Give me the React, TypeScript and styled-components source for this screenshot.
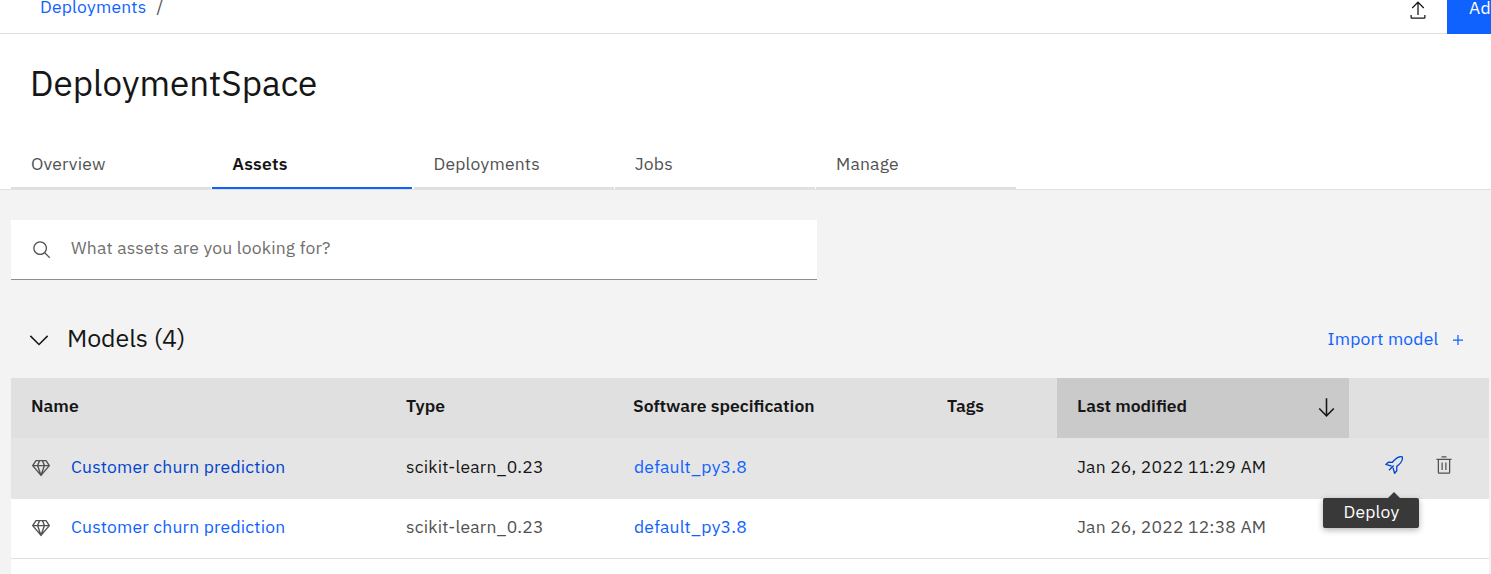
import React from "react";
import styled, { createGlobalStyle } from "styled-components";

const GlobalStyle = createGlobalStyle`
  * { box-sizing: border-box; }
  html, body { margin: 0; height: 100%; overflow: hidden; }
  body {
    background: #f3f3f3;
    color: #161616;
    font-family: "IBM Plex Sans", Roboto, "Liberation Sans", sans-serif;
    font-size: 17.5px;
    line-height: 22px;
  }
`;

const Page = styled.div`
  width: 1491px;
  height: 574px;
  overflow: hidden;
  display: flex;
  flex-direction: column;
`;

const Text = styled.span<{ $spacing?: number }>`
  letter-spacing: ${(p) => p.$spacing ?? 0.2}px;
  white-space: pre;
`;

const TopBar = styled.header`
  height: 34px;
  flex: none;
  display: flex;
  align-items: flex-start;
  background: #fff;
  border-bottom: 1px solid #e0e0e0;
`;

const Breadcrumb = styled.nav`
  flex: 1;
  display: flex;
  gap: 10px;
  padding-left: 40px;
  height: 33px;
  margin-top: -4px;
  color: #525252;
`;

const Link = styled.a<{ $hover?: boolean }>`
  color: ${(p) => (p.$hover ? "#0043ce" : "#0f62fe")};
  text-decoration: none;
`;

const TopAction = styled.div`
  display: flex;
  width: 39px;
  color: #161616;
`;

const PrimaryButton = styled.div`
  width: 44px;
  height: 34px;
  padding-left: 22px;
  background: #0f62fe;
  color: #fff;
  overflow: hidden;
  line-height: 16px;
`;

const SpaceHeader = styled.section`
  flex: none;
  height: 156px;
  display: flex;
  flex-direction: column;
  justify-content: space-between;
  background: #fff;
  border-bottom: 1px solid #e0e0e0;
`;

const Title = styled.h1`
  margin: 25px 0 0 30px;
  font-size: 35px;
  font-weight: 400;
  line-height: 48px;
`;

const Tabs = styled.div`
  display: flex;
  gap: 1.25px;
  padding-left: 11px;
`;

const Tab = styled.div<{ $active?: boolean }>`
  width: 200px;
  height: 50px;
  padding: 14px 20px 0;
  border-bottom: 2px solid ${(p) => (p.$active ? "#0f62fe" : "#e0e0e0")};
  color: ${(p) => (p.$active ? "#161616" : "#525252")};
  font-weight: ${(p) => (p.$active ? 600 : 400)};
`;

const SearchBox = styled.div`
  flex: none;
  width: 806px;
  height: 60px;
  margin: 30px 0 0 11px;
  padding: 0 0 3px 20.5px;
  display: flex;
  align-items: center;
  gap: 19.5px;
  background: #fff;
  border-bottom: 1px solid #8d8d8d;
  color: #6f6f6f;
  svg { margin-top: 4px; color: #525252; }
`;

const SectionHeader = styled.div`
  flex: none;
  height: 98px;
  display: flex;
  align-items: center;
  padding: 20px 23px 0 24px;
`;

const SectionTitle = styled.h2`
  flex: 1;
  margin: 0 0 2px 13px;
  font-size: 25px;
  font-weight: 400;
  line-height: 32px;
`;

const ImportLink = styled(Link)`
  display: flex;
  align-items: center;
  gap: 9.5px;
  svg { margin-top: 1px; }
`;

const Table = styled.div`
  width: 1478px;
  margin-left: 11px;
  flex: 1;
  background: #fff;
`;

const Row = styled.div<{ $kind?: "head" | "hover" }>`
  display: grid;
  grid-template-columns: 375px 227px 314px 130px 292px 140px;
  height: ${(p) => (p.$kind === "hover" ? 61 : 60)}px;
  background: ${(p) => (p.$kind === "head" ? "#e0e0e0" : p.$kind === "hover" ? "#e5e5e5" : "#fff")};
  color: ${(p) => (p.$kind ? "#161616" : "#525252")};
  border-bottom: ${(p) => (p.$kind ? "none" : "1px solid #e0e0e0")};
  font-weight: ${(p) => (p.$kind === "head" ? 600 : 400)};
`;

const Cell = styled.div<{ $sorted?: boolean; $inset?: number }>`
  display: flex;
  align-items: center;
  justify-content: ${(p) => (p.$sorted ? "space-between" : "flex-start")};
  padding: 0 12px 3px ${(p) => p.$inset ?? 20}px;
  background: ${(p) => (p.$sorted ? "#cacaca" : "transparent")};
`;

const HeadCell = styled(Cell)`
  padding-right: 10px;
  padding-bottom: 4px;
  svg { margin-top: 3px; }
`;

const NameCell = styled(Cell)`
  gap: 20px;
  svg { color: #525252; margin-top: 1px; }
`;

const Actions = styled.div`
  display: flex;
  align-items: center;
  gap: 30px;
  padding: 0 0 8px 35px;
  color: #525252;
`;

const DeployAction = styled.div`
  position: relative;
  display: flex;
  color: #0043ce;
`;

const Tooltip = styled.div`
  position: absolute;
  top: 43px;
  left: -61px;
  width: 96px;
  height: 30px;
  padding-left: 20.5px;
  border-radius: 2px;
  background: #393939;
  color: #fff;
  line-height: 28px;
  box-shadow: 0 2px 6px rgba(0, 0, 0, 0.3);
  z-index: 1;
  &::before {
    content: "";
    position: absolute;
    top: -6px;
    left: 65px;
    border: 6px solid transparent;
    border-top: 0;
    border-bottom-color: #393939;
  }
`;

const Icon = ({ d, size = 20 }: { d: string; size?: number }) => (
  <svg width={size} height={size} viewBox="0 0 32 32" fill="currentColor">
    <path d={d} />
  </svg>
);

const icons = {
  export:
    "M26 24v4H6v-4H4v4a2 2 0 0 0 2 2h20a2 2 0 0 0 2-2v-4zM6 12l1.41 1.41L15 5.83V24h2V5.83l7.59 7.58L26 12 16 2z",
  search:
    "M29 27.586l-7.552-7.552a11.018 11.018 0 1 0-1.414 1.414L27.586 29zM4 13a9 9 0 1 1 9 9 9.01 9.01 0 0 1-9-9z",
  chevron: "M16 23L6.2 13.2l1.15-1.15L16 20.7l8.65-8.65 1.15 1.15z",
  add: "M17 15V8h-2v7H8v2h7v7h2v-7h7v-2z",
  arrowDown: "M24.59 16.59L17 24.17V4h-2v20.17l-7.59-7.58L6 18l10 10 10-10z",
  trash:
    "M12 12h2v12h-2zM18 12h2v12h-2zM4 6v2h2v20a2 2 0 0 0 2 2h16a2 2 0 0 0 2-2V8h2V6zM8 28V8h16v20zM12 2h8v2h-8z",
};

const RocketIcon = () => (
  <svg width="20" height="20" viewBox="0 0 20 20" fill="none" stroke="currentColor" strokeWidth="1.3" strokeLinejoin="round">
    <path d="M17.6 1.6C15 1.3 12.6 2.5 10.2 5.3L8.4 7.3L4.4 7.2L1.8 9.4L7.6 11.2M17.6 1.6Q18.4 1.6 18.4 2.4C18.7 5 17.5 7.4 14.7 9.8L12.7 11.6L12.8 15.8L10.6 18.2L9 12.8M5 15.2L9.7 10.5" />
  </svg>
);

const DiamondIcon = () => (
  <svg width="20" height="20" viewBox="0 0 20 20" fill="none" stroke="currentColor" strokeWidth="1.4" strokeLinejoin="round">
    <path d="M5 2.6h10l3.3 5L10 17.4 1.7 7.6zM1.7 7.6h16.6M8.6 2.6L6.6 7.6 10 17.4l3.4-9.8-2-5" />
  </svg>
);

const tabs = [
  { label: "Overview" },
  { label: "Assets", active: true },
  { label: "Deployments" },
  { label: "Jobs" },
  { label: "Manage" },
];

const models = [
  { modified: "Jan 26, 2022 11:29 AM", hover: true },
  { modified: "Jan 26, 2022 12:38 AM", hover: false },
];

export default function App() {
  return (
    <Page>
      <GlobalStyle />
      <TopBar>
        <Breadcrumb>
          <Link><Text>Deployments</Text></Link>
          <Text>/</Text>
        </Breadcrumb>
        <TopAction><Icon d={icons.export} /></TopAction>
        <PrimaryButton><Text>Add</Text></PrimaryButton>
      </TopBar>
      <SpaceHeader>
        <Title><Text $spacing={0}>DeploymentSpace</Text></Title>
        <Tabs>
          {tabs.map((t) => (
            <Tab key={t.label} $active={t.active}><Text>{t.label}</Text></Tab>
          ))}
        </Tabs>
      </SpaceHeader>
      <SearchBox>
        <Icon d={icons.search} />
        <Text>What assets are you looking for?</Text>
      </SearchBox>
      <SectionHeader>
        <Icon d={icons.chevron} size={30} />
        <SectionTitle><Text $spacing={-0.1}>Models (4)</Text></SectionTitle>
        <ImportLink><Text>Import model</Text><Icon d={icons.add} /></ImportLink>
      </SectionHeader>
      <Table>
        <Row $kind="head">
          <HeadCell><Text $spacing={0}>Name</Text></HeadCell>
          <HeadCell><Text $spacing={0}>Type</Text></HeadCell>
          <HeadCell><Text $spacing={0}>Software specification</Text></HeadCell>
          <HeadCell><Text $spacing={0}>Tags</Text></HeadCell>
          <HeadCell $sorted><Text $spacing={0}>Last modified</Text><Icon d={icons.arrowDown} size={25} /></HeadCell>
          <HeadCell />
        </Row>
        {models.map((m) => (
          <Row key={m.modified} $kind={m.hover ? "hover" : undefined}>
            <NameCell>
              <DiamondIcon />
              <Link $hover={m.hover}><Text>Customer churn prediction</Text></Link>
            </NameCell>
            <Cell><Text>scikit-learn_0.23</Text></Cell>
            <Cell $inset={21}><Link><Text>default_py3.8</Text></Link></Cell>
            <Cell />
            <Cell><Text>{m.modified}</Text></Cell>
            {m.hover && (
              <Actions>
                <DeployAction>
                  <RocketIcon />
                  <Tooltip><Text>Deploy</Text></Tooltip>
                </DeployAction>
                <Icon d={icons.trash} />
              </Actions>
            )}
          </Row>
        ))}
      </Table>
    </Page>
  );
}
